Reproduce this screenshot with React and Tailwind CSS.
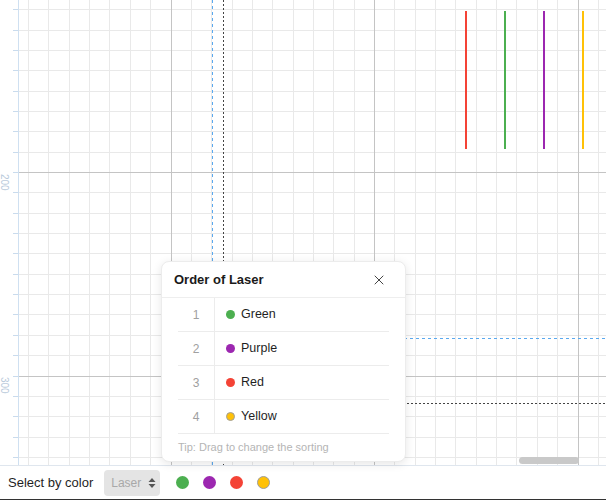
import { X } from 'lucide-react'

const MINOR = '#e9e9e9'
const MAJOR = '#c4c4c4'
const STEP = 20.35

const lasers = [
  { x: 466, color: '#f44336' },
  { x: 505, color: '#4caf50' },
  { x: 544, color: '#9c27b0' },
  { x: 583, color: '#ffc107' },
]

const order = [
  { n: 1, name: 'Green',  color: 'bg-[#4caf50]' },
  { n: 2, name: 'Purple', color: 'bg-[#9c27b0]' },
  { n: 3, name: 'Red',    color: 'bg-[#f44336]' },
  { n: 4, name: 'Yellow', color: 'bg-[#ffc107] border border-[#9e9e9e]' },
]

const swatches = [
  'bg-[#4caf50]',
  'bg-[#9c27b0]',
  'bg-[#f44336]',
  'bg-[#ffc107] border border-[#9e9e9e]',
]

function Canvas() {
  const vLines = []
  for (let k = -7; k <= 21; k++) {
    const x = Math.round(170.5 + STEP * k) + 0.5
    vLines.push({ x, major: k % 10 === 0 })
  }
  const hLines = []
  for (let k = -8; k <= 14; k++) {
    const y = Math.round(172 + STEP * k) + 0.5
    hLines.push({ y, major: k % 10 === 0 })
  }

  return (
    <svg width="606" height="465" className="block" shapeRendering="crispEdges">
      <rect x="0" y="0" width="606" height="465" fill="#ffffff" />

      {/* grid */}
      {vLines.filter(l => !l.major).map(l => (
        <line key={'v' + l.x} x1={l.x} y1="0" x2={l.x} y2="465" stroke={MINOR} />
      ))}
      {hLines.filter(l => !l.major).map(l => (
        <line key={'h' + l.y} x1="18" y1={l.y} x2="606" y2={l.y} stroke={MINOR} />
      ))}
      {vLines.filter(l => l.major).map(l => (
        <line key={'V' + l.x} x1={l.x} y1="0" x2={l.x} y2="465" stroke={MAJOR} />
      ))}
      {hLines.filter(l => l.major).map(l => (
        <line key={'H' + l.y} x1="18" y1={l.y} x2="606" y2={l.y} stroke={MAJOR} />
      ))}

      {/* ruler */}
      <rect x="0" y="0" width="18" height="465" fill="#ffffff" />
      <line x1="18.5" y1="0" x2="18.5" y2="465" stroke="#cfe0f1" />
      {hLines.map(l => (
        <line key={'t' + l.y} x1="13" y1={l.y} x2="18" y2={l.y} stroke="#c9dbed" />
      ))}
      {[{ y: 174, t: '200' }, { y: 377, t: '300' }].map(lb => (
        <text key={lb.t} x="1" y={lb.y} transform={`rotate(90 1 ${lb.y})`}
          fontSize="10" fill="#b9cadb" fontFamily="'Liberation Sans', sans-serif"
          shapeRendering="auto">
          {lb.t}
        </text>
      ))}

      {/* guides */}
      <line x1="212.5" y1="0" x2="212.5" y2="465" stroke="#5aa9ef" strokeDasharray="3 3" />
      <line x1="223.5" y1="0" x2="223.5" y2="465" stroke="#444" strokeDasharray="2 2" />
      <line x1="212" y1="338.5" x2="606" y2="338.5" stroke="#5aa9ef" strokeDasharray="3 3" />
      <line x1="223" y1="403.5" x2="606" y2="403.5" stroke="#444" strokeDasharray="2 2" />

      {/* laser lines */}
      {lasers.map(l => (
        <line key={l.x} x1={l.x} y1="11" x2={l.x} y2="149" stroke={l.color} strokeWidth="2" />
      ))}
    </svg>
  )
}

function OrderPanel() {
  return (
    <div className="absolute left-[161px] top-[261px] w-[245px] h-[201px] bg-white rounded-lg
      border border-[#ececec] shadow-[0_2px_10px_rgba(0,0,0,0.10)]">
      <div className="h-[36px] flex items-center justify-between pl-[12px] pr-[18px] border-b border-[#eeeeee]">
        <span className="text-[13px] font-bold text-[#1a1a1a]">Order of Laser</span>
        <X size={16} strokeWidth={1.5} className="text-[#444]" />
      </div>

      <div className="mx-[16px]">
        {order.map(o => (
          <div key={o.n} className="h-[34px] flex border-b border-[#ececec]">
            <div className="w-[37px] border-r border-[#ececec] flex items-center justify-center
              text-[12px] text-[#a0a0a0]">
              {o.n}
            </div>
            <div className="flex items-center pl-[11px] gap-[6px] text-[12.5px] text-[#1f1f1f]">
              <span className={`w-[9px] h-[9px] rounded-full ${o.color}`} />
              {o.name}
            </div>
          </div>
        ))}
      </div>

      <p className="mx-[16px] mt-[5px] text-[11px] text-[#b5b5b5]">Tip: Drag to change the sorting</p>
    </div>
  )
}

export default function App() {
  return (
    <div className="w-[606px] h-[500px] flex flex-col bg-white overflow-hidden"
      style={{ fontFamily: "'Liberation Sans', Arial, sans-serif" }}>
      <div className="relative h-[465px]">
        <Canvas />
        <OrderPanel />
        <div className="absolute left-[519px] top-[457px] w-[60px] h-[7px] rounded-full bg-[#c9c9c9]" />
      </div>

      <div className="h-[35px] flex items-center border-t border-[#dfe6ee] border-b border-b-[#333]">
        <span className="ml-[8px] text-[13px] text-[#1f1f1f]">Select by color</span>
        <div className="ml-[11px] w-[56px] h-[26px] bg-[#e4e4e4] rounded-[4px] flex items-center justify-between pl-[7px] pr-[4px]">
          <span className="text-[12px] text-[#a8a8a8]">Laser</span>
          <svg width="8" height="12" viewBox="0 0 8 12">
            <path d="M4 1 L7.5 5 H0.5 Z" fill="#555" />
            <path d="M4 11 L7.5 7 H0.5 Z" fill="#555" />
          </svg>
        </div>
        <div className="ml-[16px] flex items-center gap-[14px]">
          {swatches.map((c, i) => (
            <span key={i} className={`w-[13px] h-[13px] rounded-full ${c}`} />
          ))}
        </div>
      </div>
    </div>
  )
}
